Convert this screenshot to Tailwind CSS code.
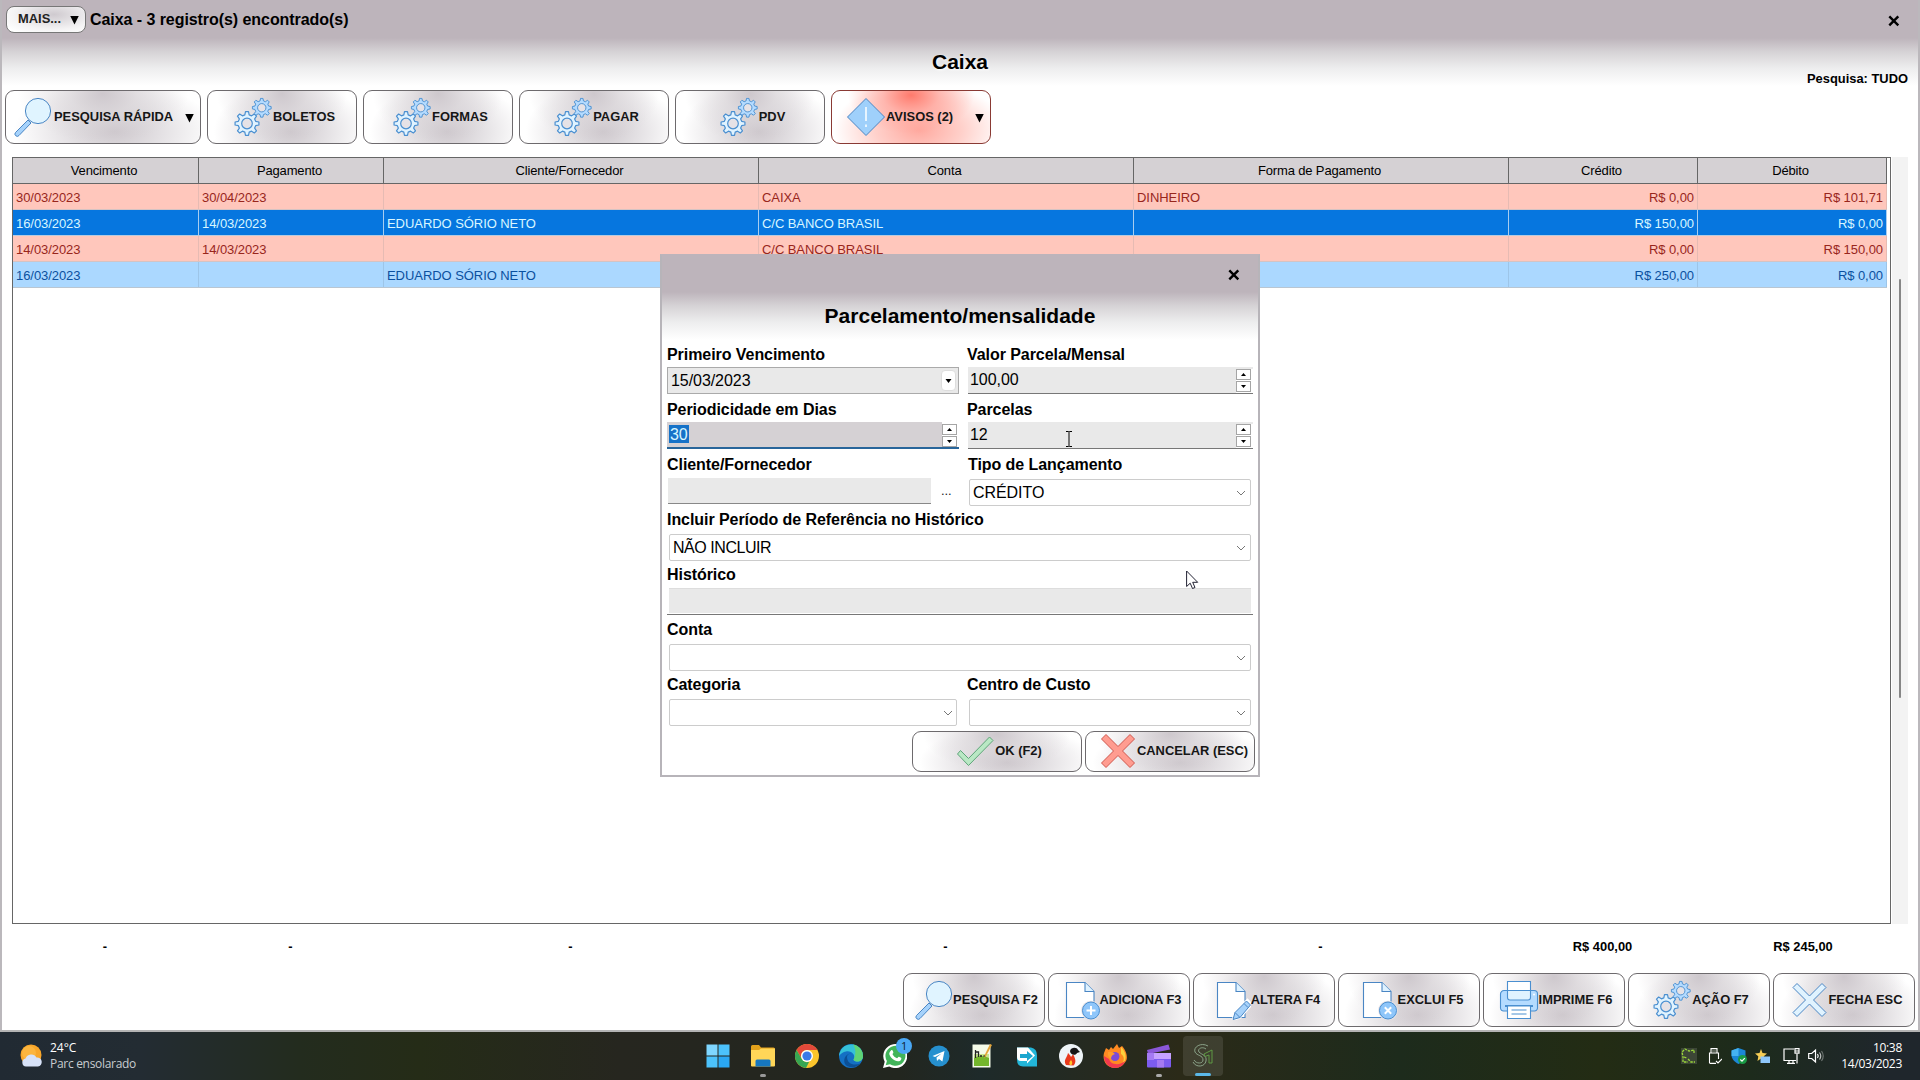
<!DOCTYPE html>
<html lang="pt-BR">
<head>
<meta charset="utf-8">
<title>Caixa</title>
<script src="https://cdn.jsdelivr.net/npm/@tailwindcss/browser@4"></script>
</head>
<body class="relative flex h-[1080px] w-[1920px] flex-col overflow-hidden bg-white font-['Liberation_Sans',Arial,sans-serif] text-black">

<svg class="hidden">
  <symbol id="gear" viewBox="-12 -12 24 24">
    <path d="M-2-8L-1.4-11H1.4L2-8L4.24-7.07L6.79-8.77L8.77-6.79L7.07-4.24L8-2L11-1.4V1.4L8 2L7.07 4.24L8.77 6.79L6.79 8.77L4.24 7.07L2 8L1.4 11H-1.4L-2 8L-4.24 7.07L-6.79 8.77L-8.77 6.79L-7.07 4.24L-8 2L-11 1.4V-1.4L-8-2L-7.07-4.24L-8.77-6.79L-6.79-8.77L-4.24-7.07Z"/>
    <circle r="4.9" fill="#e6e2e6"/>
  </symbol>
  <symbol id="gears" viewBox="0 0 40 40">
    <g stroke="#4a8fd0" stroke-width="1.1" stroke-linejoin="round">
      <use href="#gear" x="1" y="13.500" width="26" height="26" fill="#e0f3ff"/>
      <use href="#gear" x="18.500" y="0.500" width="20.500" height="20.500" fill="#b4dbff"/>
    </g>
  </symbol>
  <symbol id="lens" viewBox="0 0 40 40">
    <path d="M16 23L3.500 35.500a2 2 0 0 0 3.500 3L19 26z" fill="#a6d2fb" stroke="#4a86c4"/>
    <circle cx="26" cy="14" r="12.600" fill="#e0f4ff" stroke="#4a86c4"/>
  </symbol>
  <symbol id="page" viewBox="0 0 40 40">
    <path d="M6.500 2.500h18.500l9 9v26h-27.500z" fill="#fff" stroke="#4a86c4" stroke-width="1.100"/>
    <path d="M25 2.500v9h9" fill="#dff2ff" stroke="#4a86c4" stroke-width="1.100"/>
  </symbol>
  <symbol id="chev" viewBox="0 0 10 6"><path d="M1 1l4 4 4-4" fill="none" stroke="#777" stroke-width="1"/></symbol>
  <symbol id="tri" viewBox="0 0 10 10"><path d="M0.300 0.500h9.400L5 10z" fill="#000"/></symbol>
  <symbol id="close" viewBox="0 0 12 12"><path d="M1.300 1.300l9 9M10.300 1.300l-9 9" stroke="#000" stroke-width="2.400"/></symbol>
</svg>

<main class="flex h-[1032px] flex-col border-b-2 border-[#b4b4b4] bg-[linear-gradient(#bdb4bb_0,#bdb4bb_38px,#d6d3d6_52px,#ededee_68px,#fff_86px)]">
  <div class="flex flex-1 flex-col border-x-2 border-[#bbb8bc]">
    <header class="flex h-10 items-start pt-1.5 pr-[18px] pl-1">
      <div class="flex h-[27px] w-20 items-center justify-between rounded-lg border border-[#777] bg-[radial-gradient(ellipse_at_60%_30%,#cfcacf_0,#f4f3f4_60%,#fff_90%)] pr-1.5 pl-[11px] text-[12.900px] font-bold text-[#222]">
        <span class="-mt-0.5">MAIS...</span><svg class="h-2.5 w-[9px]"><use href="#tri"/></svg>
      </div>
      <h1 class="ml-1 flex-1 text-[16px] leading-7 font-bold tracking-[-0.060px]">Caixa - 3 registro(s) encontrado(s)</h1>
      <svg class="mt-[9px] h-3 w-3"><use href="#close"/></svg>
    </header>
    <div class="relative flex h-[50px] items-start justify-center">
      <h2 class="pt-2.5 text-[21px] leading-6 font-bold [text-shadow:1px_1px_3px_#fff]">Caixa</h2>
      <p class="absolute top-[31px] right-2.5 text-[12.900px] leading-4 font-bold">Pesquisa: TUDO</p>
    </div>

    <nav class="flex h-[54px] gap-1.5 pl-[3px] text-[12.900px] font-bold text-[#161616]">
      <div class="flex w-[196px] items-center rounded-[9px] border border-[#6d6a6d] bg-[radial-gradient(ellipse_44%_95%_at_50%_5%,#c4bdc3cc_0,#d5d0d499_40%,#ffffff00_100%),radial-gradient(ellipse_52%_95%_at_56%_78%,#cdc7cc_0,#e3e0e3_45%,#ffffff00_100%),linear-gradient(#fff,#fff)] pb-px pl-1.5">
        <svg class="size-10"><use href="#lens"/></svg><span class="ml-0.5 flex-1">PESQUISA RÁPIDA</span><svg class="mt-0.5 mr-1.5 h-2.5 w-[9px]"><use href="#tri"/></svg>
      </div>
      <div class="flex w-[150px] items-center justify-center rounded-[9px] border border-[#6d6a6d] bg-[radial-gradient(ellipse_44%_95%_at_50%_5%,#c4bdc3cc_0,#d5d0d499_40%,#ffffff00_100%),radial-gradient(ellipse_52%_95%_at_56%_78%,#cdc7cc_0,#e3e0e3_45%,#ffffff00_100%),linear-gradient(#fff,#fff)] pb-px pl-1"><svg class="size-10"><use href="#gears"/></svg>BOLETOS</div>
      <div class="flex w-[150px] items-center justify-center rounded-[9px] border border-[#6d6a6d] bg-[radial-gradient(ellipse_44%_95%_at_50%_5%,#c4bdc3cc_0,#d5d0d499_40%,#ffffff00_100%),radial-gradient(ellipse_52%_95%_at_56%_78%,#cdc7cc_0,#e3e0e3_45%,#ffffff00_100%),linear-gradient(#fff,#fff)] pb-px pl-1"><svg class="size-10"><use href="#gears"/></svg>FORMAS</div>
      <div class="flex w-[150px] items-center justify-center rounded-[9px] border border-[#6d6a6d] bg-[radial-gradient(ellipse_44%_95%_at_50%_5%,#c4bdc3cc_0,#d5d0d499_40%,#ffffff00_100%),radial-gradient(ellipse_52%_95%_at_56%_78%,#cdc7cc_0,#e3e0e3_45%,#ffffff00_100%),linear-gradient(#fff,#fff)] pb-px pl-1"><svg class="size-10"><use href="#gears"/></svg>PAGAR</div>
      <div class="flex w-[150px] items-center justify-center rounded-[9px] border border-[#6d6a6d] bg-[radial-gradient(ellipse_44%_95%_at_50%_5%,#c4bdc3cc_0,#d5d0d499_40%,#ffffff00_100%),radial-gradient(ellipse_52%_95%_at_56%_78%,#cdc7cc_0,#e3e0e3_45%,#ffffff00_100%),linear-gradient(#fff,#fff)] pb-px pl-1"><svg class="size-10"><use href="#gears"/></svg>PDV</div>
      <div class="flex w-40 items-center rounded-[9px] border border-[#8a3a34] bg-[radial-gradient(ellipse_40%_75%_at_50%_8%,#ff7a6c_0,#ffa096aa_45%,#ffffff00_100%),radial-gradient(ellipse_54%_95%_at_55%_75%,#ffa99f_0,#ffd0ca_50%,#ffffff00_100%),linear-gradient(#fff,#fff)] pb-px pl-3.5">
        <svg class="size-10" viewBox="0 0 40 40"><path d="M20 1.500L38.500 20 20 38.500 1.500 20z" fill="#9fd0fb" stroke="#4a86c4" stroke-linejoin="round"/><path d="M20 10v14M20 27.500v2.500" stroke="#fff" stroke-width="1.500"/></svg><span class="flex-1">AVISOS (2)</span><svg class="mt-0.5 mr-1.5 h-2.5 w-[9px]"><use href="#tri"/></svg>
      </div>
    </nav>

    <section class="mt-[13px] flex h-[767px] pl-2.5">
      <div class="w-[1879px] border border-[#666] text-[13px] tracking-[-0.060px]">
        <div class="grid h-[26px] w-[1874px] grid-cols-[186px_185px_375px_375px_375px_189px_189px] border-b border-[#666] bg-[#d5d1d4] text-center leading-[25px] tracking-[-0.150px] [&>span]:border-r [&>span]:border-[#666] [&>span]:pr-[3px]">
          <span>Vencimento</span><span>Pagamento</span><span>Cliente/Fornecedor</span><span>Conta</span><span>Forma de Pagamento</span><span>Crédito</span><span>Débito</span>
        </div>
        <div class="grid h-[26px] w-[1874px] grid-cols-[186px_185px_375px_375px_375px_189px_189px] border-b border-[#d5c3c3] bg-[#ffc7bc] leading-[27px] text-[#98261c] [&>span]:h-[25px] [&>span]:border-r [&>span]:border-[#e6bbb3] [&>span]:px-[3px]">
          <span>30/03/2023</span><span>30/04/2023</span><span></span><span>CAIXA</span><span>DINHEIRO</span><span class="text-right">R$ 0,00</span><span class="text-right">R$ 101,71</span>
        </div>
        <div class="grid h-[26px] w-[1874px] grid-cols-[186px_185px_375px_375px_375px_189px_189px] border-b border-[#b8cbe0] bg-[#0676df] leading-[27px] text-[#d9f6ff] [&>span]:h-[25px] [&>span]:border-r [&>span]:border-[#a8cdf0] [&>span]:px-[3px]">
          <span>16/03/2023</span><span>14/03/2023</span><span>EDUARDO SÓRIO NETO</span><span>C/C BANCO BRASIL</span><span></span><span class="text-right">R$ 150,00</span><span class="text-right">R$ 0,00</span>
        </div>
        <div class="grid h-[26px] w-[1874px] grid-cols-[186px_185px_375px_375px_375px_189px_189px] border-b border-[#d5c3c3] bg-[#ffc7bc] leading-[27px] text-[#98261c] [&>span]:h-[25px] [&>span]:border-r [&>span]:border-[#e6bbb3] [&>span]:px-[3px]">
          <span>14/03/2023</span><span>14/03/2023</span><span></span><span>C/C BANCO BRASIL</span><span></span><span class="text-right">R$ 0,00</span><span class="text-right">R$ 150,00</span>
        </div>
        <div class="grid h-[26px] w-[1874px] grid-cols-[186px_185px_375px_375px_375px_189px_189px] border-b border-[#b9c6d2] bg-[#abd8ff] leading-[27px] text-[#0a50a0] [&>span]:h-[25px] [&>span]:border-r [&>span]:border-[#9dc5e8] [&>span]:px-[3px]">
          <span>16/03/2023</span><span></span><span>EDUARDO SÓRIO NETO</span><span></span><span></span><span class="text-right">R$ 250,00</span><span class="text-right">R$ 0,00</span>
        </div>
      </div>
      <div class="ml-px w-4 bg-[#f3f3f3] pt-[122px] pl-[7px]"><div class="h-[419px] w-0.5 rounded bg-[#868686]"></div></div>
    </section>

    <div class="grid h-[49px] grid-cols-[186px_185px_375px_375px_375px_189px_213px] pt-[13px] pl-2.5 text-center text-[12.900px] leading-5 font-bold">
      <span>-</span><span>-</span><span>-</span><span>-</span><span>-</span><span>R$ 400,00</span><span class="pr-px">R$ 245,00</span>
    </div>

    <footer class="flex h-[54px] justify-end gap-[3px] pr-[3px] text-[12.900px] font-bold text-[#161616] [&>div]:flex [&>div]:w-[142px] [&>div]:items-center [&>div]:justify-center [&>div]:rounded-[9px] [&>div]:border [&>div]:border-[#6d6a6d] [&>div]:bg-[radial-gradient(ellipse_44%_95%_at_50%_5%,#c4bdc3cc_0,#d5d0d499_40%,#ffffff00_100%),radial-gradient(ellipse_52%_95%_at_56%_78%,#cdc7cc_0,#e3e0e3_45%,#ffffff00_100%),linear-gradient(#fff,#fff)] [&>div]:pb-px [&>div]:pl-[3px]">
      <div><svg class="size-10"><use href="#lens"/></svg>PESQUISA F2</div>
      <div><svg class="size-10" viewBox="0 0 40 40"><use href="#page"/><circle cx="31" cy="30.500" r="9.800" fill="#e6e2e6"/><circle cx="31" cy="30.500" r="8.500" fill="#8fc6fa" stroke="#4a8fd0"/><path d="M26.500 30.500h9M31 26v9" stroke="#fff" stroke-width="2"/></svg>ADICIONA F3</div>
      <div><svg class="size-10" viewBox="0 0 40 40"><use href="#page"/><path d="M22 39.500l2-7L36.500 20l4 4.500L29 37.500z" fill="#a6d2fb" stroke="#fff" stroke-width="2.500"/><path d="M22 39.500l2-7L35.500 21l4 4L29 37.500zM24 32.500l5 5M33 23.500l4 4" fill="#a6d2fb" stroke="#4a86c4"/></svg>ALTERA F4</div>
      <div><svg class="size-10" viewBox="0 0 40 40"><use href="#page" x="-1"/><circle cx="30" cy="30.500" r="9.800" fill="#e6e2e6"/><circle cx="30" cy="30.500" r="8.500" fill="#8fc6fa" stroke="#4a8fd0"/><path d="M26.800 27.300l6.400 6.400M33.200 27.300l-6.400 6.400" stroke="#fff" stroke-width="2"/></svg>EXCLUI F5</div>
      <div><svg class="size-10" viewBox="0 0 40 40"><g stroke="#4a8fd0" stroke-width="1.100"><path d="M5 10.500h30a3.500 3.500 0 0 1 3.500 3.500v14a3 3 0 0 1-3 3h-31a3 3 0 0 1-3-3V14A3.500 3.500 0 0 1 5 10.500z" fill="#b4dbff"/><path d="M8.500 1.500h23v9h-23z" fill="#fff"/><path d="M8.500 10.500h23v7a2.500 2.500 0 0 1-2.500 2.500h-18a2.500 2.500 0 0 1-2.500-2.500z" fill="#e0f3ff"/><path d="M6 26h28" stroke-width="2"/><path d="M8.500 26h23v12.500h-23z" fill="#fff"/><path d="M12.500 30h15M12.500 34h15"/></g><circle cx="35" cy="14.500" r="1" fill="#fff"/></svg>IMPRIME F6</div>
      <div><svg class="size-10"><use href="#gears"/></svg>AÇÃO F7</div>
      <div><svg class="size-10" viewBox="0 0 40 40"><path d="M5 7.500L9 3.500 21.500 16 34 3.500 38 7.500 25.500 20 38 32.500 34 36.500 21.500 24 9 36.500 5 32.500 17.500 20z" fill="#e0f3ff" stroke="#4a86c4" stroke-linejoin="round"/></svg>FECHA ESC</div>
    </footer>
  </div>
</main>

<!-- Windows taskbar -->
<div class="relative flex h-12 items-center bg-[linear-gradient(90deg,#212a33_0,#232c33_140px,#232c1e_300px,#252c17_420px,#26261f_620px,#22261f_900px,#1e2a2a_980px,#2b2a18_1180px,#1d2b1c_1400px,#232c14_1600px,#1d2b1c_1750px,#1f262c_1890px)] font-['Open_Sans','Noto_Sans',sans-serif] text-[12px] leading-4 tracking-[-0.300px] text-white">
  <svg class="ml-[19px] size-6" viewBox="0 0 24 24"><circle cx="12" cy="11" r="10.500" fill="#f8a62a"/><circle cx="10" cy="9" r="7" fill="#fcb53e"/><path d="M7 22.500a4 4 0 0 1-.5-7.900 6 6 0 0 1 11-1 4.500 4.500 0 0 1 1.500 8.900z" fill="#d7e2f8"/></svg>
  <div class="ml-[7px] flex-1"><div class="tracking-normal">24°C</div><div class="text-[#c8ccd0]">Parc ensolarado</div></div>

  <div class="absolute top-0 left-[698px] flex h-12 items-center gap-1 [&>div]:relative [&>div]:flex [&>div]:h-10 [&>div]:w-10 [&>div]:items-center [&>div]:justify-center [&_svg]:size-6">
    <div><svg viewBox="0 0 24 24" fill="#4cc2fb"><path d="M0.500 0.500h11v11h-11z" fill="#7fd6ff"/><path d="M12.500 0.500h11v11h-11zM0.500 12.500h11v11h-11z"/><path d="M12.500 12.500h11v11h-11z" fill="#2aa7f2"/></svg></div>
    <div class="left-px"><svg viewBox="0 0 24 24"><path d="M0 2.500a1.500 1.500 0 0 1 1.500-1.500H8l2 2.500h12.500A1.500 1.500 0 0 1 24 5v8H0z" fill="#e3a11b"/><path d="M0 6h8l2-1.500h14V21.500A1 1 0 0 1 23 22.500H1a1 1 0 0 1-1-1z" fill="#ffd658"/><path d="M4.500 22.500V17a1.500 1.500 0 0 1 1.500-1.500h12A1.500 1.500 0 0 1 19.500 17v5.500z" fill="#1677bf"/></svg><i class="absolute -bottom-px h-[3px] w-1.5 rounded bg-[#999]"></i></div>
    <div class="left-px"><svg viewBox="0 0 24 24"><circle cx="12" cy="12" r="12" fill="#fbc52c"/><path d="M1.600 6A12 12 0 0 1 22.400 6H12a6 6 0 0 0-5.200 9z" fill="#e2493a"/><path d="M1.600 6l5.200 9a6 6 0 0 0 7.500 2.500L11 24A12 12 0 0 1 1.600 6z" fill="#37a653"/><circle cx="12" cy="12" r="6" fill="#fff"/><circle cx="12" cy="12" r="4.600" fill="#3b79e8"/></svg></div>
    <div class="left-px"><svg viewBox="0 0 24 24"><circle cx="12" cy="12" r="12" fill="#1470c4"/><path d="M0.500 9A12 12 0 0 1 24 12c0 4-3 5.500-5.500 5.500s-4.500-1-3.700-2.500C17 11 12 6 7 7.500 4 8 2 9.500 0 12z" fill="#35c1d8"/><path d="M14 0.200A12 12 0 0 1 24 12c0 4-3 5.500-5.500 5.500s-4.500-1-3.700-2.500C17 10 17 5 14 .2z" fill="#5fd475"/><path d="M8 13c0 6 6 9.500 13.500 6.500A12 12 0 0 1 8 22C3 19 5 10 12 9.500 9 10 8 11 8 13z" fill="#0c4f96"/></svg></div>
    <div class="left-px"><svg viewBox="0 0 24 24"><path d="M0 24l1.700-6.200A12 12 0 1 1 6.300 22.500z" fill="#fff"/><path d="M2.700 21.300l1.200-4.300A10 10 0 1 1 7 20.200z" fill="#41b45a"/><path d="M8 6.500c1-1 1.800 0 2.300 1.700.3 1-1 1.500-.8 2 1 2 2.500 3.300 4.500 4 .6.200 1.200-1.700 2-1.400 3 1.200 2.600 1.500 2 3-1 1.800-3.500 2-6 .8-3-1.500-5-4-5.700-6.300C6 9 7 7.500 8 6.500z" fill="#fff"/></svg><i class="absolute top-0.5 right-[3px] h-4 w-4 rounded-full bg-[#4aa8f5] text-center text-[11px] leading-4 text-[#102030] not-italic">1</i></div>
    <div class="left-px"><svg viewBox="0 0 24 24"><circle cx="12" cy="12" r="10.500" fill="#2690cf"/><path d="M5.500 12l12-5-2.100 10.500-3.400-2.500-2 2-.5-3.500 5-4-6.500 3.500z" fill="#fff"/></svg></div>
    <div><svg viewBox="0 0 24 24"><path d="M2.500 0.500h18v23h-18z" fill="#f5fbe9"/><path d="M4 12h15v10H4z" fill="#74b62c"/><path d="M4 14q7-4 15 0v-4H4z" fill="#c8e68f"/><path d="M5.500 6v8M5.500 8h3v5M10 12h2M13.500 12h2" stroke="#222" fill="none" stroke-width="1.300"/><path d="M22 1l-6 11-1.500 2.500.2-3.500L20 0z" fill="#e5a63a"/></svg></div>
    <div class="left-px"><svg viewBox="0 0 24 24"><path d="M2 3.500h14q6 1 6 8v11H8q-6 0-6-7z" fill="#22b5d8"/><path d="M2 3.500h11l7 8-8 8V17H6q-4 0-4-4z" fill="#fff"/><path d="M5 10h7V7l6 5-6 5v-3H5z" fill="#1ba6cf"/></svg></div>
    <div class="left-px"><svg viewBox="0 0 24 24"><circle cx="12" cy="12" r="12" fill="#eef4f7"/><path d="M7 21C4 16 8 14 9 9c3 3 3 4 3 4s1.500-2 2-3c2 4 4 8 .5 11.500z" fill="#e8391c"/><path d="M11 21c-1.500-2 0-4 1-5 1 1 2 3 .5 5z" fill="#ffc52c"/><path d="M11 7c1-4 7-4 8-1l2 2-3 1c-1 3-7 2-7-2z" fill="#151515"/></svg></div>
    <div class="left-px"><svg viewBox="0 0 24 24"><path d="M1 9l2-5 3 2 2-3 2 2 4-5 2 4 3-2c3 3 6 9 4.500 14C21 21 17 24 12 24 4 24-1 17 1 9z" fill="#ff8a22"/><path d="M18 3c6 6 6 13 1 18 3-6 2-9-1-11z" fill="#ffd23c"/><path d="M1 12c0 8 6 12 11 12s9-3 10-7c-4 4-14 5-16-2z" fill="#f2394e"/><circle cx="12" cy="12.500" r="4.500" fill="#7b4bd6"/><path d="M5 8q4-1 7 2-4 1-4 5-4-3-3-7z" fill="#ff9e2a"/></svg></div>
    <div class="left-px"><svg viewBox="0 0 24 24"><path d="M0 6L21.500 0.500l1.500 5L1 10z" fill="#8a57d8"/><path d="M0 9h24v7H0z" fill="#c7a3ff"/><path d="M0 15h24v7.500a1 1 0 0 1-1 1H1a1 1 0 0 1-1-1z" fill="#7c5cf0"/><path d="M0 9h7v7H0zM10 16h7v7.500h-7z" fill="#a57af3"/></svg><i class="absolute -bottom-px h-[3px] w-1.5 rounded bg-[#aaa]"></i></div>
    <div class="left-px rounded bg-white/10"><svg viewBox="0 0 24 24" fill="none" stroke="#8aa288" stroke-width="1"><path d="M17 2C10-2 2 3 4 8c2 4 8 3 8 8 0 4-7 4-9 0M15 5c-4-3-9 0-7 3 3 3 8 3 7 9-1 6-10 7-13 1"/><path d="M13 10l8-4v13h-3v-8l-4 1.500z" stroke="#5f9a45"/></svg><i class="absolute bottom-0 h-[3px] w-4 rounded bg-[#5bb8e8]"></i></div>
  </div>

  <div class="flex items-center [&>svg]:h-4">
    <svg class="mr-[11px] w-4" viewBox="0 0 16 16" fill="none"><path d="M0 0h16v16H0z" fill="#3c4636"/><path d="M2 14V9L1 4l3-3 4 2 5-1v3M3 14h4M7 11l3 3h4M3 9l3 1" stroke="#9bd83a" stroke-width="1.300" stroke-dasharray="2.500 1"/></svg>
    <svg class="mr-[9px] w-[14px]" viewBox="0 0 14 16" fill="none" stroke="#fff" stroke-width="1.100"><path d="M3 5V.6h6V5M1.500 15V5h9v6M1.500 15.400H8M8 13l2 2 4-4"/><path d="M5 2.500v1M7 2.500v1"/></svg>
    <svg class="mr-2 w-4" viewBox="0 0 16 16"><path d="M7.500 0l7 2.500V7c0 4-3 7-7 9-4-2-7-5-7-9V2.500z" fill="#1b87d6"/><path d="M7.500 0v8H.6V2.500z" fill="#45b3f2"/><circle cx="11.500" cy="11.500" r="4.500" fill="#1a9a45"/><path d="M9.300 11.500l1.700 1.600 2.800-3" stroke="#fff" stroke-width="1.200" fill="none"/></svg>
    <svg class="mr-3 w-4" viewBox="0 0 16 16"><path d="M6 1l1.500 4 4.500.5-3.200 2.800L9.500 13 6 10.500 2.500 13l.8-4.700L0 5.500 4.500 5z" fill="#f6ce55"/><path d="M5.500 8.500H15v6.500H5.500z" fill="#8ec8fa"/></svg>
    <svg class="mr-2 w-[17px]" viewBox="0 0 17 16" fill="none" stroke="#fff" stroke-width="1.200"><path d="M11 1H1v11.500h12M4 15.400h8M6 12.500v3M10 12.500v3M14 6v9.500M12 .7h4v4.500h-4zM12 3h4"/></svg>
    <svg class="mr-[17px] w-4" viewBox="0 0 16 16" fill="none" stroke="#fff" stroke-width="1.200"><path d="M.7 5.500h3L7.500 2v12L3.700 10.500h-3zM9.500 6q1.500 2 0 4"/><path d="M11.500 4.500q2.500 3.500 0 7" opacity=".7"/><path d="M13.500 3q3.500 5 0 10" opacity=".35"/></svg>
  </div>
  <div class="mr-[18px] text-right"><div>10:38</div><div>14/03/2023</div></div>
</div>

<!-- Installment dialog -->
<div class="absolute top-[254px] left-[660px] flex h-[523px] w-[600px] flex-col border-2 border-[#b7b4b9] border-t-[#bdb4bb] bg-[linear-gradient(#bdb4bb_0,#bdb4bb_36px,#d6d3d6_50px,#ededee_66px,#fff_84px)]">
  <div class="relative h-[87px] pt-12 text-center text-[21px] leading-6 font-bold">Parcelamento/mensalidade
    <svg class="absolute top-[13px] right-[18px] size-3"><use href="#close"/></svg>
  </div>
  <form class="grid grid-cols-[292px_286px] gap-x-2 pl-[5px] text-[16px] tracking-[-0.060px] [&>div]:h-[55px] [&_label]:block [&_label]:h-6 [&_label]:leading-6 [&_label]:font-bold">
    <div><label>Primeiro Vencimento</label>
      <div class="flex h-[27px] items-center justify-between border border-[#aaa] bg-[#e9e9e9] pr-[2px] pl-[3px]"><span>15/03/2023</span><span class="flex h-[21px] w-[15px] items-center justify-center rounded-sm border border-[#ddd] bg-white"><svg class="h-1 w-[7px]" viewBox="0 0 6 4"><path d="M0 0h6L3 4z"/></svg></span></div></div>
    <div><label>Valor Parcela/Mensal</label>
      <div class="ml-px flex h-[27px] justify-between border-b border-[#777] bg-[#e9e9e9] pt-0.5 pl-0.5"><span class="leading-[22px]">100,00</span>
        <span class="flex w-[17px] flex-col gap-px bg-white pr-0.5 [&>b]:flex [&>b]:h-[11px] [&>b]:items-center [&>b]:justify-center [&>b]:border [&>b]:border-[#a5a5a5]"><b><svg class="h-[3px] w-[5px]" viewBox="0 0 5 3"><path d="M0 3h5L2.500 0z"/></svg></b><b><svg class="h-[3px] w-[5px]" viewBox="0 0 5 3"><path d="M0 0h5L2.500 3z"/></svg></b></span></div></div>

    <div><label>Periodicidade em Dias</label>
      <div class="flex h-[27px] justify-between border-b-2 border-[#28659a] bg-[#d5d1d4] pl-0.5"><span class="mt-[3px] h-[18px] bg-[#1672c8] px-px leading-[19px] text-[#d9f6ff]">30</span>
        <span class="flex w-[17px] flex-col gap-px bg-white pt-0.5 pr-0.5 [&>b]:flex [&>b]:h-[11px] [&>b]:items-center [&>b]:justify-center [&>b]:border [&>b]:border-[#a5a5a5]"><b><svg class="h-[3px] w-[5px]" viewBox="0 0 5 3"><path d="M0 3h5L2.500 0z"/></svg></b><b><svg class="h-[3px] w-[5px]" viewBox="0 0 5 3"><path d="M0 0h5L2.500 3z"/></svg></b></span></div></div>
    <div><label>Parcelas</label>
      <div class="ml-px flex h-[27px] justify-between border-b border-[#777] bg-[#e9e9e9] pt-0.5 pl-0.5"><span class="leading-[22px]">12</span>
        <span class="flex w-[17px] flex-col gap-px bg-white pr-0.5 [&>b]:flex [&>b]:h-[11px] [&>b]:items-center [&>b]:justify-center [&>b]:border [&>b]:border-[#a5a5a5]"><b><svg class="h-[3px] w-[5px]" viewBox="0 0 5 3"><path d="M0 3h5L2.500 0z"/></svg></b><b><svg class="h-[3px] w-[5px]" viewBox="0 0 5 3"><path d="M0 0h5L2.500 3z"/></svg></b></span></div></div>

    <div><label>Cliente/Fornecedor</label>
      <div class="flex"><span class="mt-px ml-px h-[26px] w-[263px] border-b border-[#888] bg-[#e9e9e9]"></span><span class="ml-2.5 text-[13px] leading-[27px] text-[#222]">...</span></div></div>
    <div><label class="pl-px">Tipo de Lançamento</label>
      <div class="mt-0.5 mr-0.5 ml-[2px] flex h-[27px] items-center justify-between rounded-xs border border-[#ccc] bg-white pr-1 pl-[3px]"><span>CRÉDITO</span><svg class="h-1.5 w-2.5"><use href="#chev"/></svg></div></div>

    <div class="col-span-2"><label>Incluir Período de Referência no Histórico</label>
      <div class="mt-0.5 mr-0.5 ml-0.5 flex h-[27px] items-center justify-between rounded-xs border border-[#ccc] bg-white pr-1 pl-[3px]"><span class="tracking-[-0.450px]">NÃO INCLUIR</span><svg class="h-1.5 w-2.5"><use href="#chev"/></svg></div></div>
    <div class="col-span-2"><label>Histórico</label>
      <div class="mt-px h-[27px] border-b border-[#777]"><div class="mx-0.5 h-[25px] border-t border-[#ddd] bg-[#e9e9e9]"></div></div></div>
    <div class="col-span-2"><label>Conta</label>
      <div class="mt-0.5 mr-0.5 ml-0.5 flex h-[27px] items-center justify-end rounded-xs border border-[#ccc] bg-white pr-1"><svg class="h-1.5 w-2.5"><use href="#chev"/></svg></div></div>
    <div><label>Categoria</label>
      <div class="mt-0.5 mr-0.5 ml-0.5 flex h-[27px] items-center justify-end rounded-xs border border-[#ccc] bg-white pr-[3px]"><svg class="h-1.5 w-2.5"><use href="#chev"/></svg></div></div>
    <div><label>Centro de Custo</label>
      <div class="mt-0.5 mr-0.5 ml-0.5 flex h-[27px] items-center justify-end rounded-xs border border-[#ccc] bg-white pr-1"><svg class="h-1.5 w-2.5"><use href="#chev"/></svg></div></div>
  </form>
  <div class="mt-[3px] flex h-[41px] justify-end gap-[3px] pr-[3px] text-[12.900px] font-bold text-[#161616] [&>div]:flex [&>div]:w-[170px] [&>div]:items-center [&>div]:justify-center [&>div]:rounded-[9px] [&>div]:border [&>div]:border-[#6d6a6d] [&>div]:bg-[radial-gradient(ellipse_44%_95%_at_50%_5%,#c4bdc3cc_0,#d5d0d499_40%,#ffffff00_100%),radial-gradient(ellipse_52%_95%_at_56%_78%,#cdc7cc_0,#e3e0e3_45%,#ffffff00_100%),linear-gradient(#fff,#fff)] [&>div]:pb-0.5">
    <div class="pl-1"><svg class="mt-px mr-px h-[38px] w-[38px]" viewBox="0 0 38 38"><path d="M1.500 22L4.500 18.500 12.500 26.500 33.500 5 37 8.500 12.500 33.500z" fill="#b9e8c4" stroke="#5fa57a" stroke-linejoin="round"/></svg>OK (F2)</div>
    <div class="pl-2"><svg class="mt-px mr-px h-[38px] w-[36px] shrink-0" viewBox="0 0 36 38"><path d="M1.500 7L6 2.500 18 14.500 30 2.500 34.500 7 22.500 19 34.500 31 30 35.500 18 23.500 6 35.500 1.500 31 13.500 19z" fill="#ff9c90" stroke="#d0564c" stroke-linejoin="round"/></svg>CANCELAR (ESC)</div>
  </div>
</div>

<!-- pointers -->
<svg class="absolute top-[431px] left-[1065px] h-4 w-2" viewBox="0 0 8 16"><path d="M1 .5h2.500l.5.500.5-.5H7M1 15.500h2.500l.5-.5.5.5H7M4 1v14" fill="none" stroke="#000"/></svg>
<svg class="absolute top-[570px] left-[1186px] h-5 w-[13px]" viewBox="0 0 13 20"><path d="M.6 1v15.500l3.600-3.300 2.300 5.300 2.500-1-2.300-5.200h5z" fill="#fff" stroke="#223"/></svg>
</body>
</html>
